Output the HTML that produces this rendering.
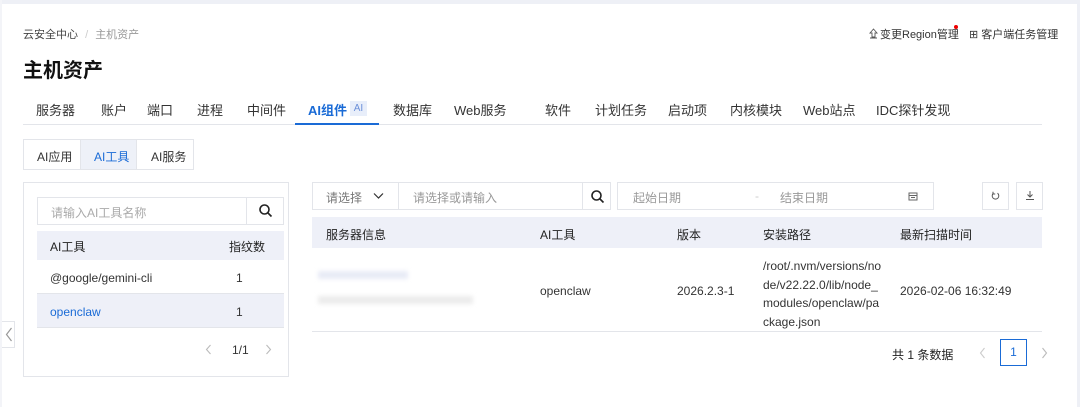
<!DOCTYPE html>
<html><head><meta charset="utf-8"><style>
*{margin:0;padding:0;box-sizing:border-box}
body{width:1080px;height:407px;background:#fff;position:relative;overflow:hidden;font-family:"Liberation Sans","Noto Sans CJK SC",sans-serif;font-size:12px;color:#333}
.a{position:absolute;white-space:nowrap}
.bd{position:absolute;border:1px solid #e3e5ea}
.hd{position:absolute;background:#eef0f8}
.tab{position:absolute;top:100px;font-size:13px;color:#333}
.g{color:#999}
</style></head><body>
<div class="a" style="left:0;top:0;width:1080px;height:4px;background:#eef0f6"></div>
<div class="a" style="left:1077px;top:0;width:3px;height:407px;background:#eef0f6"></div>
<div class="a" style="left:0;top:0;width:2px;height:407px;background:#f3f4f8"></div>

<div class="a" style="left:23px;top:26px;font-size:11px;color:#444">云安全中心 <span style="color:#ccc;margin:0 4px">/</span> <span class="g">主机资产</span></div>
<div class="a" style="left:23px;top:54px;font-size:20px;font-weight:bold;color:#111">主机资产</div>
<svg class="a" style="left:869px;top:28px" width="9" height="11"><path d="M4.5 1L1 5h2v4h3V5h2z M1 10h7" fill="none" stroke="#555" stroke-width="0.9"/></svg>
<div class="a" style="left:880px;top:26px;font-size:11px;color:#333">变更Region管理</div>
<div class="a" style="left:954px;top:25px;width:4px;height:4px;border-radius:2px;background:#e00"></div>
<div class="a" style="left:969px;top:26px;font-size:11px;color:#333">⊞ 客户端任务管理</div>

<div class="tab" style="left:36px">服务器</div>
<div class="tab" style="left:101px">账户</div>
<div class="tab" style="left:147px">端口</div>
<div class="tab" style="left:197px">进程</div>
<div class="tab" style="left:247px">中间件</div>
<div class="tab" style="left:308px;color:#1a6bd6;font-weight:bold">AI组件</div>
<div class="a" style="left:350px;top:101px;width:17px;height:15px;background:#e8eefa;color:#6b8fd8;font-size:10px;text-align:center;line-height:15px">AI</div>
<div class="tab" style="left:393px">数据库</div>
<div class="tab" style="left:454px">Web服务</div>
<div class="tab" style="left:545px">软件</div>
<div class="tab" style="left:595px">计划任务</div>
<div class="tab" style="left:668px">启动项</div>
<div class="tab" style="left:730px">内核模块</div>
<div class="tab" style="left:803px">Web站点</div>
<div class="tab" style="left:876px">IDC探针发现</div>
<div class="a" style="left:23px;top:124px;width:1019px;height:1px;background:#e3e5ea"></div>
<div class="a" style="left:295px;top:123px;width:84px;height:2px;background:#1a6bd6"></div>

<div class="bd" style="left:23px;top:139px;width:171px;height:31px"></div>
<div class="a" style="left:80px;top:140px;width:57px;height:29px;background:#eef1f8;border-left:1px solid #e3e5ea;border-right:1px solid #e3e5ea"></div>
<div class="a" style="left:37px;top:148px;color:#333">AI应用</div>
<div class="a" style="left:94px;top:148px;color:#1a6bd6">AI工具</div>
<div class="a" style="left:151px;top:148px;color:#333">AI服务</div>

<div class="bd" style="left:23px;top:182px;width:266px;height:195px"></div>
<div class="bd" style="left:37px;top:197px;width:247px;height:28px"></div>
<div class="a" style="left:246px;top:197px;width:1px;height:28px;background:#e3e5ea"></div>
<div class="a" style="left:51px;top:204px;color:#aaa">请输入AI工具名称</div>
<svg class="a" style="left:258px;top:203px" width="15" height="15" viewBox="0 0 15 15"><circle cx="6.5" cy="6.5" r="4.5" fill="none" stroke="#222" stroke-width="1.6"/><path d="M10 10l3.5 3.5" stroke="#222" stroke-width="1.6"/></svg>
<div class="hd" style="left:37px;top:231px;width:247px;height:29px"></div>
<div class="a" style="left:50px;top:238px;color:#222">AI工具</div>
<div class="a" style="left:229px;top:238px;color:#222">指纹数</div>
<div class="a" style="left:37px;top:293px;width:247px;height:1px;background:#e3e5ea"></div>
<div class="a" style="left:50px;top:271px">@google/gemini-cli</div>
<div class="a" style="left:236px;top:271px">1</div>
<div class="hd" style="left:37px;top:294px;width:247px;height:34px;border-bottom:1px solid #e3e5ea"></div>
<div class="a" style="left:50px;top:305px;color:#1a6bd6">openclaw</div>
<div class="a" style="left:236px;top:305px">1</div>
<svg class="a" style="left:205px;top:344px" width="7" height="11"><path d="M5.5 1L1.5 5.5l4 4.5" fill="none" stroke="#bbb" stroke-width="1.1"/></svg>
<div class="a" style="left:232px;top:343px">1/1</div>
<svg class="a" style="left:265px;top:344px" width="7" height="11"><path d="M1.5 1l4 4.5-4 4.5" fill="none" stroke="#bbb" stroke-width="1.1"/></svg>
<div class="a" style="left:2px;top:321px;width:13px;height:27px;border:1px solid #e3e5ea;border-left:none;background:#fff"></div>
<svg class="a" style="left:5px;top:327px" width="8" height="15"><path d="M6.5 1L1.5 7.5l5 6.5" fill="none" stroke="#999" stroke-width="1.2"/></svg>

<div class="bd" style="left:312px;top:182px;width:299px;height:28px"></div>
<div class="a" style="left:398px;top:182px;width:1px;height:28px;background:#e3e5ea"></div>
<div class="a" style="left:582px;top:182px;width:1px;height:28px;background:#e3e5ea"></div>
<div class="a" style="left:326px;top:189px;color:#777">请选择</div>
<svg class="a" style="left:373px;top:192px" width="11" height="8"><path d="M1 1.5l4.5 4.5 4.5-4.5" fill="none" stroke="#333" stroke-width="1.2"/></svg>
<div class="a" style="left:413px;top:189px;color:#999">请选择或请输入</div>
<svg class="a" style="left:590px;top:189px" width="15" height="15" viewBox="0 0 15 15"><circle cx="6.5" cy="6.5" r="4.5" fill="none" stroke="#222" stroke-width="1.6"/><path d="M10 10l3.5 3.5" stroke="#222" stroke-width="1.6"/></svg>
<div class="bd" style="left:617px;top:182px;width:317px;height:28px"></div>
<div class="a" style="left:633px;top:189px;color:#999">起始日期</div>
<div class="a" style="left:755px;top:189px;color:#ccc">-</div>
<div class="a" style="left:780px;top:189px;color:#999">结束日期</div>
<svg class="a" style="left:908px;top:191px" width="10" height="10"><rect x="1" y="2" width="8" height="7" fill="none" stroke="#666"/><path d="M1 4.5h8M3 6.5h4" stroke="#666"/></svg>
<div class="bd" style="left:982px;top:182px;width:27px;height:28px"></div>
<svg class="a" style="left:991px;top:191px" width="9" height="10"><path d="M6.5 2.2A3.3 3.3 0 1 1 2.5 2.2" fill="none" stroke="#555" stroke-width="1"/><path d="M2 0.8v2.2h2.2" fill="none" stroke="#555" stroke-width="1"/></svg>
<div class="bd" style="left:1016px;top:182px;width:27px;height:28px"></div>
<svg class="a" style="left:1025px;top:190px" width="10" height="11"><path d="M5 1v6M2.5 4.5L5 7l2.5-2.5M1 9.5h8" fill="none" stroke="#555" stroke-width="1"/></svg>

<div class="hd" style="left:312px;top:217px;width:730px;height:31px"></div>
<div class="a" style="left:326px;top:226px;color:#222">服务器信息</div>
<div class="a" style="left:540px;top:226px;color:#222">AI工具</div>
<div class="a" style="left:677px;top:226px;color:#222">版本</div>
<div class="a" style="left:763px;top:226px;color:#222">安装路径</div>
<div class="a" style="left:900px;top:226px;color:#222">最新扫描时间</div>
<div class="a" style="left:318px;top:271px;width:90px;height:8px;background:#e8ebf6;filter:blur(2px)"></div>
<div class="a" style="left:318px;top:296px;width:155px;height:8px;background:#ececec;filter:blur(2px)"></div>
<div class="a" style="left:540px;top:284px">openclaw</div>
<div class="a" style="left:677px;top:284px">2026.2.3-1</div>
<div class="a" style="left:763px;top:257px;line-height:18.5px">/root/.nvm/versions/no<br>de/v22.22.0/lib/node_<br>modules/openclaw/pa<br>ckage.json</div>
<div class="a" style="left:900px;top:284px">2026-02-06 16:32:49</div>
<div class="a" style="left:312px;top:331px;width:730px;height:1px;background:#e3e5ea"></div>
<div class="a" style="left:892px;top:346px;color:#222">共 1 条数据</div>
<svg class="a" style="left:979px;top:347px" width="7" height="12"><path d="M5.5 1L1.5 6l4 5" fill="none" stroke="#ccc" stroke-width="1.1"/></svg>
<div class="a" style="left:1000px;top:339px;width:27px;height:27px;border:1px solid #1a6bd6;color:#1a6bd6;text-align:center;line-height:25px">1</div>
<svg class="a" style="left:1041px;top:347px" width="7" height="12"><path d="M1.5 1l4 5-4 5" fill="none" stroke="#bbb" stroke-width="1.1"/></svg>
</body></html>
